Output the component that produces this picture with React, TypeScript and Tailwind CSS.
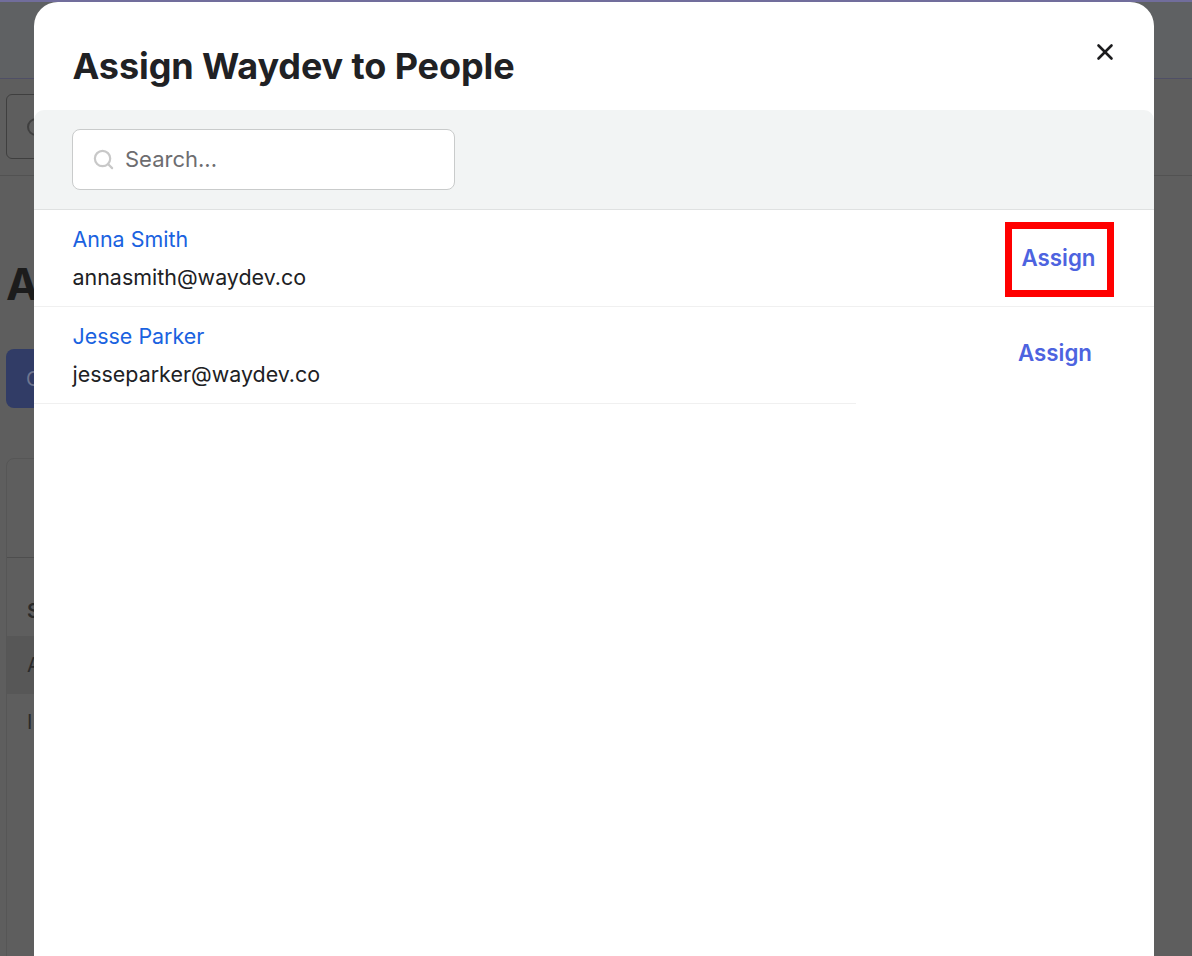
import React from "react";
import { X, Search } from "lucide-react";

export default function App() {
  return (
    <div className="relative h-[956px] w-[1192px] overflow-hidden bg-[#5e5e5e] font-['Inter',sans-serif]">
      {/* Dimmed page behind the dialog */}
      <div className="h-[2px] bg-[#716d9c]" />
      <div className="h-[77px] border-b border-[#4f4f66] bg-[#5f6163]" />
      <div className="h-[97px] border-b border-[#525252] pl-[6px] pt-[15px]">
        <div className="flex h-[65px] w-[100px] items-center rounded-[6px] border border-[#3f3f3f] pl-[20px]">
          <div className="h-[18px] w-[18px] rounded-full border-2 border-[#3f3f3f]" />
        </div>
      </div>
      <div className="pl-[6px]">
        <div className="pt-[82px] text-[44px] leading-[52px] font-bold text-[#1c1c1c]">A</div>
        <div className="mt-[39px] flex h-[59px] w-[100px] items-center rounded-[8px] bg-[#313c66] pl-[20px] text-[20px] text-[#6f7690]">
          C
        </div>
        <div className="mt-[50px] h-[600px] w-[1000px] rounded-[8px] border border-[#565656] text-[20px] text-[#2a2a2a]">
          <div className="h-[99px] border-b border-[#4e4e4e]" />
          <div className="flex h-[78px] items-end pb-[10px] pl-[20px] font-semibold">S</div>
          <div className="flex h-[58px] items-center bg-[#575757] pl-[20px]">A</div>
          <div className="flex h-[56px] items-center pl-[20px]">I</div>
        </div>
      </div>

      {/* Dialog */}
      <div className="absolute left-[34px] top-[2px] h-[1000px] w-[1120px] rounded-[24px] bg-white">
        <div className="relative flex h-[108px] items-start pl-[38.5px] pt-[41px]">
          <h1 className="text-[36px] leading-[46px] font-bold tracking-[-0.1px] text-[#202124]">
            Assign Waydev to People
          </h1>
          <X className="absolute right-[36px] top-[37px] h-[26px] w-[26px] text-[#1c1c1e]" strokeWidth={2.4} />
        </div>

        <div className="h-[100px] rounded-t-[10px] border-b border-[#dfe1e1] bg-[#f2f4f4] pl-[38px] pt-[19px]">
          <div className="flex h-[61px] w-[383px] items-center rounded-[8px] border border-[#c9cbcb] bg-white pl-[19px]">
            <Search className="h-[23px] w-[23px] text-[#c8c8c8]" strokeWidth={2.3} />
            <span className="ml-[10px] text-[22px] text-[#6d6d70]">Search...</span>
          </div>
        </div>

        <div className="relative flex h-[97px] flex-col border-b border-[#f0f0f0] pl-[38.5px] pt-[14px] text-[21.45px] leading-[30px]">
          <span className="text-[#1a62e0]">Anna Smith</span>
          <span className="mt-[8px] text-[#202124]">annasmith@waydev.co</span>
          <div className="absolute left-[971px] top-[12px] flex h-[75px] w-[109px] items-center justify-center pb-[4px] pr-[2px] border-[7px] border-[#ff0000] text-[22.3px] font-semibold text-[#4d63e0]">
            Assign
          </div>
        </div>

        <div className="relative flex h-[97px] w-[822px] flex-col border-b border-[#f0f0f0] pl-[38.5px] pt-[14px] text-[21.45px] leading-[30px]">
          <span className="text-[#1a62e0]">Jesse Parker</span>
          <span className="mt-[8px] text-[#202124]">jesseparker@waydev.co</span>
          <span className="absolute left-[984px] top-[31px] whitespace-nowrap text-[22.3px] font-semibold text-[#4d63e0]">
            Assign
          </span>
        </div>
      </div>
    </div>
  );
}
